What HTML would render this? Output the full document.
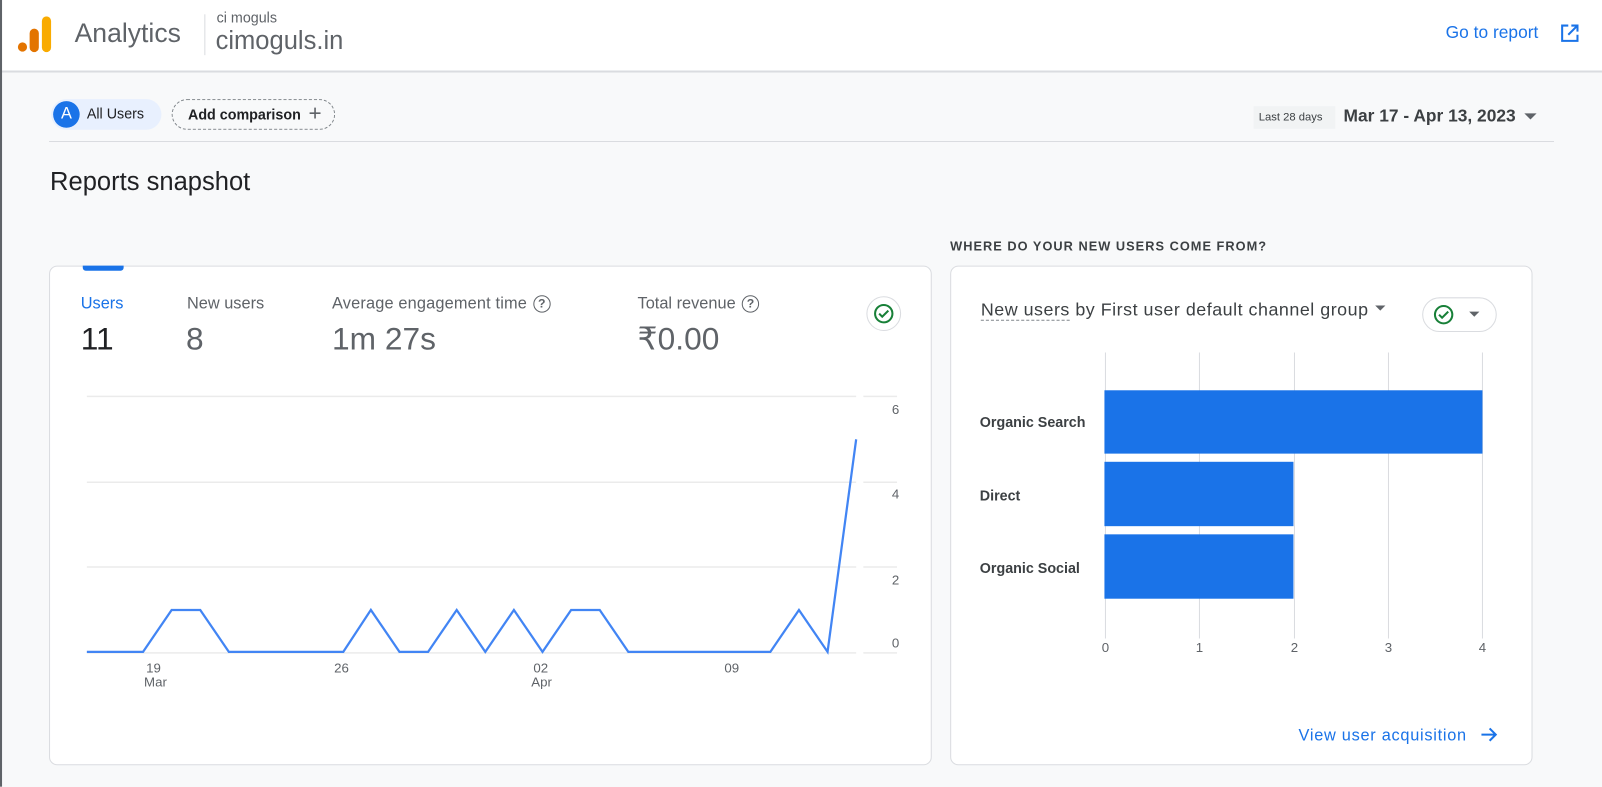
<!DOCTYPE html>
<html><head><meta charset="utf-8"><style>
*{box-sizing:border-box;margin:0;padding:0}
html,body{width:1602px;height:787px;overflow:hidden;background:#f8f9fa}
body{font-family:"Liberation Sans",Arial,sans-serif;color:#202124}
#w{width:1568px;height:770px;transform:scale(1.02168);transform-origin:0 0;position:relative;background:#f8f9fa}
.abs{position:absolute}
header{position:absolute;left:0;top:0;width:1568px;height:71px;background:#fff;border-bottom:2px solid #dadce0}
.card{position:absolute;background:#fff;border:1px solid #dadce0;border-radius:8px}
.lbl{font-size:16px;color:#5f6368}
.val{font-size:31px;color:#5f6368}
.q{display:inline-block;width:17px;height:17px;border:1.6px solid #5f6368;border-radius:50%;font-size:12px;text-align:center;line-height:14px;vertical-align:1px;margin-left:6px;font-weight:bold}
</style></head><body><div id="w">
<header>
<svg class="abs" style="left:17px;top:16px" width="34" height="36"><circle cx="5" cy="30" r="4.5" fill="#e37400"/><rect x="12" y="12" width="9" height="23" rx="4.5" fill="#e37400"/><rect x="24" y="0" width="9" height="35" rx="4.5" fill="#f9ab00"/></svg>
<div class="abs" style="left:73px;top:17px;font-size:26px;color:#5f6368">Analytics</div>
<div class="abs" style="left:200px;top:14px;width:1px;height:40px;background:#dadce0"></div>
<div class="abs" style="left:212px;top:9px;font-size:14px;color:#5f6368">ci moguls</div>
<div class="abs" style="left:211px;top:26px;font-size:25px;color:#5f6368">cimoguls.in</div>
<div class="abs" style="left:1415px;top:22px;font-size:17px;color:#1a73e8">Go to report</div>
<svg class="abs" style="left:1527px;top:23px" width="19" height="19" fill="none" stroke="#1a73e8" stroke-width="2"><path d="M8 2H2v15h15v-6M11 2h6v6M17 2 8 11"/></svg>
</header>
<div class="abs" style="left:0;top:0;width:2px;height:770px;background:#5f6368"></div>
<div class="abs" style="left:50px;top:97px;width:108px;height:30px;background:#e8f0fe;border-radius:15px"></div>
<div class="abs" style="left:52px;top:99px;width:26px;height:26px;background:#1a73e8;border-radius:50%;color:#fff;font-size:16px;text-align:center;line-height:26px">A</div>
<div class="abs" style="left:85px;top:103px;font-size:14px">All Users</div>
<div class="abs" style="left:168px;top:97px;width:160px;height:30px;border:1px dashed #80868b;border-radius:15px;font-size:14px;padding:6px 0 0 15px;font-weight:bold;color:#202124">Add comparison <span style="font-weight:normal;font-size:22px;position:absolute;left:133px;top:0;color:#5f6368">+</span></div>
<div class="abs" style="left:1227px;top:104px;width:80px;height:22px;background:#f1f3f4;font-size:11px;padding:5px 0 0 5px;color:#3c4043">Last 28 days</div>
<div class="abs" style="left:1315px;top:104px;font-size:17px;font-weight:bold;color:#3c4043">Mar 17 - Apr 13, 2023</div>
<div class="abs" style="left:1492px;top:111px;border:6px solid transparent;border-top:6px solid #5f6368"></div>
<div class="abs" style="left:48px;top:138px;width:1473px;height:1px;background:#dadce0"></div>
<div class="abs" style="left:49px;top:164px;font-size:25px">Reports snapshot</div>
<div class="abs" style="left:930px;top:234px;font-size:12.5px;font-weight:bold;letter-spacing:1px;color:#3c4043">WHERE DO YOUR NEW USERS COME FROM?</div>

<div class="card" style="left:48px;top:260px;width:864px;height:489px">
<div class="abs" style="left:32px;top:-1px;width:40px;height:5px;background:#1a73e8;border-radius:0 0 3px 3px"></div>
<div class="abs lbl" style="left:30px;top:28px;color:#1a73e8">Users</div><div class="abs val" style="left:30px;top:53px;color:#202124">11</div>
<div class="abs lbl" style="left:134px;top:28px">New users</div><div class="abs val" style="left:133px;top:53px">8</div>
<div class="abs lbl" style="left:276px;top:28px;letter-spacing:0.15px">Average engagement time<span class="q">?</span></div><div class="abs val" style="left:276px;top:53px">1m 27s</div>
<div class="abs lbl" style="left:575px;top:28px">Total revenue<span class="q">?</span></div><div class="abs val" style="left:575px;top:53px">₹0.00</div>
<div class="abs" style="left:799px;top:29px;width:34px;height:34px;border:1px solid #dadce0;border-radius:50%"></div>
<svg class="abs" style="left:806px;top:36px" width="20" height="20" fill="none" stroke="#188038" stroke-width="2"><circle cx="10" cy="10" r="8.5"/><path d="M5.5 10l3 3 6-6"/></svg>
</div>
<svg class="abs" style="left:0;top:0" width="912" height="700">
<g stroke="#ebebeb" stroke-width="1.5"><line x1="85" y1="388" x2="838" y2="388"/><line x1="85" y1="472" x2="838" y2="472"/><line x1="85" y1="555" x2="838" y2="555"/><line x1="85" y1="639" x2="838" y2="639"/><line x1="845" y1="388" x2="878" y2="388"/><line x1="845" y1="472" x2="878" y2="472"/><line x1="845" y1="555" x2="878" y2="555"/><line x1="845" y1="639" x2="878" y2="639"/></g>
<polyline fill="none" stroke="#4285f4" stroke-width="2.2" points="85,638 140,638 168,597 196,597 224,638 336,638 363,597 391,638 419,638 447,597 475,638 503,597 531,638 559,597 587,597 615,638 754,638 782,597 810,638 838,430"/>
<g font-size="13" fill="#5f6368" font-family="Liberation Sans"><text x="873" y="405">6</text><text x="873" y="488">4</text><text x="873" y="572">2</text><text x="873" y="634">0</text>
<text x="143" y="658">19</text><text x="141" y="672">Mar</text><text x="327" y="658">26</text><text x="522" y="658">02</text><text x="520" y="672">Apr</text><text x="709" y="658">09</text></g>
</svg>

<div class="card" style="left:930px;top:260px;width:570px;height:489px">
<div class="abs" style="left:29px;top:32px;font-size:17.5px;letter-spacing:0.5px;color:#3c4043;white-space:nowrap"><span style="border-bottom:1.5px dashed #80868b">New users</span> by First user default channel group</div>
<div class="abs" style="left:415px;top:38px;border:5px solid transparent;border-top:5px solid #5f6368"></div>
<div class="abs" style="left:461px;top:30px;width:73px;height:34px;border:1px solid #dadce0;border-radius:17px"></div>
<svg class="abs" style="left:472px;top:37px" width="20" height="20" fill="none" stroke="#188038" stroke-width="2"><circle cx="10" cy="10" r="8.5"/><path d="M5.5 10l3 3 6-6"/></svg>
<div class="abs" style="left:507px;top:44px;border:5px solid transparent;border-top:5px solid #5f6368"></div>
</div>
<svg class="abs" style="left:930px;top:260px" width="570" height="489">
<g stroke="#dadce0"><line x1="152" y1="85" x2="152" y2="365"/><line x1="244" y1="85" x2="244" y2="365"/><line x1="337" y1="85" x2="337" y2="365"/><line x1="429" y1="85" x2="429" y2="365"/><line x1="521" y1="85" x2="521" y2="365"/></g>
<g fill="#1a73e8"><rect x="151" y="122" width="370" height="62"/><rect x="151" y="192" width="185" height="63"/><rect x="151" y="263" width="185" height="63"/></g>
<g font-size="14" font-weight="bold" fill="#3c4043" font-family="Liberation Sans"><text x="29" y="158">Organic Search</text><text x="29" y="230">Direct</text><text x="29" y="301">Organic Social</text></g>
<g font-size="13" fill="#5f6368" font-family="Liberation Sans" text-anchor="middle"><text x="152" y="378">0</text><text x="244" y="378">1</text><text x="337" y="378">2</text><text x="429" y="378">3</text><text x="521" y="378">4</text></g>
<text x="341" y="465" font-size="16" fill="#1a73e8" font-family="Liberation Sans" textLength="164">View user acquisition</text>
<path d="M520 459h13M528 453l6 6-6 6" fill="none" stroke="#1a73e8" stroke-width="2"/>
</svg>
</div></body></html>
